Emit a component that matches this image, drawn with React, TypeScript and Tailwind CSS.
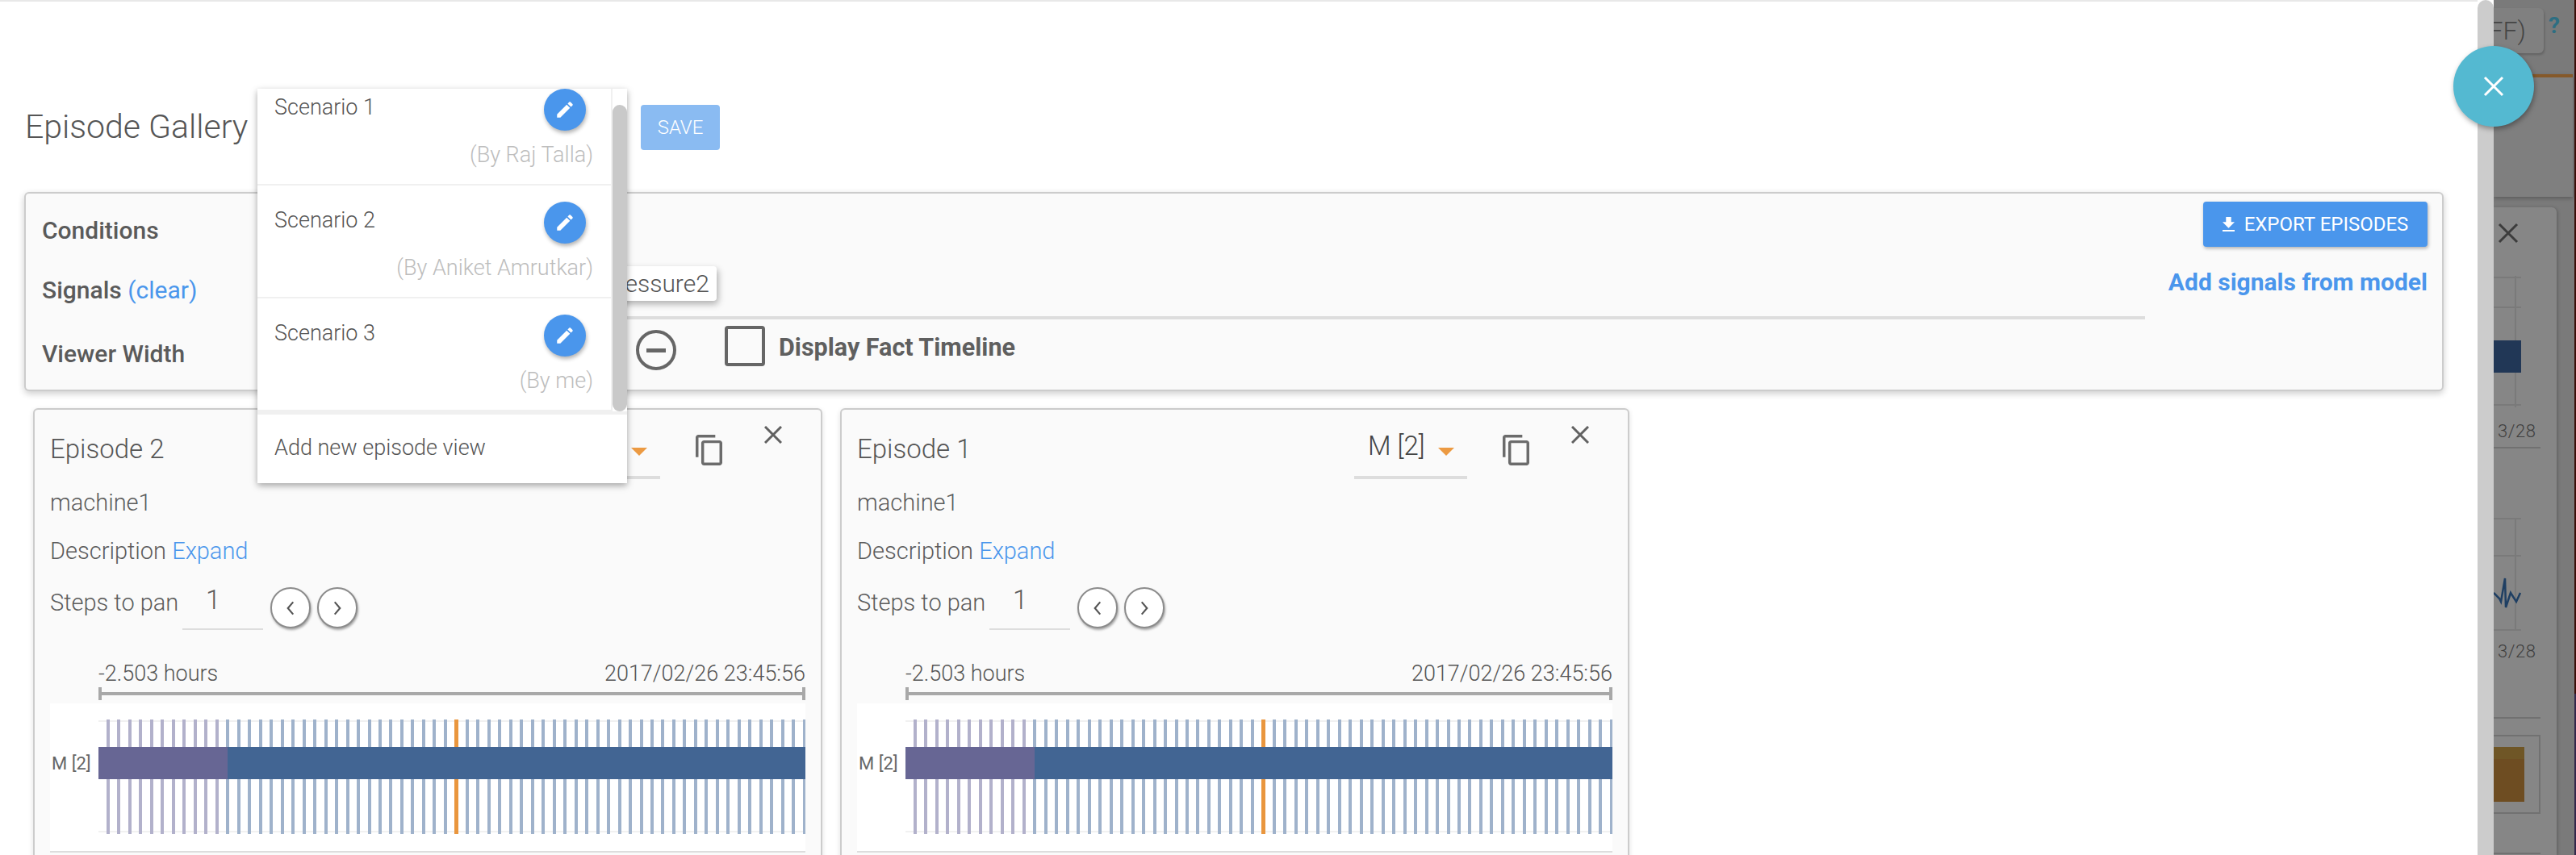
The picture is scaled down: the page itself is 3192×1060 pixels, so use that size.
import React from "react";

const TICK_COUNT = 65;
const ticks = Array.from({ length: TICK_COUNT }, (_, i) => Math.round(10 + i * 13.48));

function Timeline() {
  return (
    <svg width="876" height="183" viewBox="0 0 876 183" shapeRendering="crispEdges" className="block">
      <rect x="0" y="21" width="876" height="2" fill="#f1f1f1" />
      <rect x="0" y="158" width="876" height="2" fill="#f1f1f1" />
      {ticks.map((x, i) => (
        <rect key={i} x={x} y="20" width={i === 32 ? 5 : 4} height="142" fill={i === 32 ? "#e9963e" : i < 11 ? "#b2b1cb" : "#9fb2cb"} />
      ))}
      <rect x="0" y="54" width="160" height="40" fill="#676694" />
      <rect x="160" y="54" width="716" height="40" fill="#426593" />
    </svg>
  );
}

function EpisodeCard({ title }: { title: string }) {
  return (
    <div className="w-[978px] h-[600px] shrink-0 border-2 border-[#cccccc] rounded-[6px] bg-[#fafafa] shadow-[0_2px_6px_rgba(0,0,0,0.12)] px-[19px] flex flex-col text-[#5c5c5c]">
      <div className="h-[95px] flex items-start shrink-0">
        <div className="mt-[27px] text-[33px] leading-[44px] font-light text-[#555]">{title}</div>
        <div className="ml-auto mt-[20px] w-[140px] h-[66px] border-b-4 border-[#dddddd] flex items-start">
          <span className="ml-[17px] mt-[5px] text-[33px] leading-[40px] font-light text-[#444]">M [2]</span>
          <svg width="20" height="10" viewBox="0 0 20 10" className="ml-[16px] mt-[27px]">
            <path d="M0 0h20L10 10z" fill="#ec9a42" />
          </svg>
        </div>
        <svg width="33" height="38" viewBox="2 1 19 22" className="ml-[44px] mt-[31px]" preserveAspectRatio="none">
          <path
            d="M16 1H4c-1.1 0-2 .9-2 2v14h2V3h12V1zm3 4H8c-1.1 0-2 .9-2 2v14c0 1.1.9 2 2 2h11c1.1 0 2-.9 2-2V7c0-1.1-.9-2-2-2zm0 16H8V7h11v14z"
            fill="#6b6b6b"
          />
        </svg>
        <svg width="22" height="22" viewBox="0 0 22 22" className="ml-[52px] mt-[20px] mr-[29px]">
          <path d="M1 1L21 21M21 1L1 21" stroke="#616161" strokeWidth="3" />
        </svg>
      </div>
      <div className="h-[40px] text-[29px] leading-[40px] font-light shrink-0">machine1</div>
      <div className="mt-[20px] h-[40px] text-[29px] leading-[40px] font-light shrink-0">
        Description <span className="text-[#4a96ec]">Expand</span>
      </div>
      <div className="mt-[19px] h-[63px] flex items-start shrink-0">
        <span className="w-[157px] mt-[5px] text-[29px] leading-[40px] font-light whitespace-nowrap">Steps to pan</span>
        <div className="ml-[7px] w-[100px] h-[59px] border-b-2 border-[#dddddd] text-[33px] leading-[44px] font-light pl-[29px]">1</div>
        <div className="ml-[9px] mt-[6px] flex gap-[8px]">
          {["M15 5l-6 7 6 7", "M9 5l6 7-6 7"].map((d) => (
            <div key={d} className="w-[50px] h-[51px] rounded-full border-2 border-[#8c8c8c] bg-white shadow-[1px_2px_3px_rgba(0,0,0,0.35)] flex items-center justify-center">
              <svg width="26" height="26" viewBox="0 0 24 24">
                <path d={d} fill="none" stroke="#555" strokeWidth="2" />
              </svg>
            </div>
          ))}
        </div>
      </div>
      <div className="mt-[30px] ml-[60px] h-[40px] flex justify-between items-center text-[27px] font-light text-[#555] shrink-0">
        <span>-2.503 hours</span>
        <span>2017/02/26 23:45:56</span>
      </div>
      <svg width="876" height="16" viewBox="0 0 876 16" shapeRendering="crispEdges" className="block ml-[60px] mt-[-3px] shrink-0">
        <rect x="0" y="0" width="4" height="16" fill="#a8a8a8" />
        <rect x="872" y="0" width="4" height="16" fill="#a8a8a8" />
        <rect x="0" y="6" width="876" height="4" fill="#a8a8a8" />
      </svg>
      <div className="mt-[4px] h-[185px] shrink-0 bg-white border-b-2 border-[#dddddd] flex">
        <div className="w-[60px] h-[183px] flex items-center pl-[2px] pb-[35px] text-[22px] text-[#666] font-normal whitespace-nowrap">M [2]</div>
        <Timeline />
      </div>
    </div>
  );
}

function MenuRow({ name, by, first }: { name: string; by: string; first?: boolean }) {
  return (
    <div className={`${first ? "h-[120px]" : "h-[140px] pt-[20px]"} border-b-2 border-[#f0f0f0] flex flex-col pl-[21px] pr-[22px] shrink-0`}>
      <div className="flex justify-between items-start">
        <span className="text-[27px] leading-[44px] mt-[1px] font-light text-[#555]">{name}</span>
        <div className="w-[52px] h-[52px] mr-[9px] rounded-full bg-[#4a96ec] shadow-[1px_3px_5px_rgba(0,0,0,0.3)] flex items-center justify-center">
          <svg width="26" height="26" viewBox="0 0 24 24">
            <path
              d="M3 17.25V21h3.75L17.81 9.94l-3.75-3.75L3 17.25zM20.71 7.04c.39-.39.39-1.02 0-1.41l-2.34-2.34c-.39-.39-1.02-.39-1.41 0l-1.83 1.83 3.75 3.75 1.83-1.83z"
              fill="#fff"
            />
          </svg>
        </div>
      </div>
      <div className="mt-[8px] text-right text-[27px] leading-[44px] font-light text-[#bdbdbd]">{by}</div>
    </div>
  );
}

function Backdrop() {
  return (
    <div className="w-[102px] h-[1060px] shrink-0 flex bg-[#7a7a7a] overflow-hidden">
      <div className="w-[100px] shrink-0 flex flex-col">
        <div className="h-[92px] shrink-0 flex items-start">
          <div className="w-[62px] h-[56px] mt-[10px] bg-[#808080] rounded-br-[6px] rounded-tr-[6px] shadow-[1px_2px_3px_rgba(0,0,0,0.2)] overflow-hidden flex justify-end items-center pr-[22px] text-[32px] text-[#454545] font-light whitespace-nowrap">
            OFF)
          </div>
          <span className="ml-[6px] mt-[16px] text-[28px] leading-[32px] font-bold text-[#2d6e82]">?</span>
        </div>
        <div className="h-[152px] w-[98px] shrink-0 border-t-4 border-[#85592a] bg-[#7f7f7f] shadow-[0_2px_5px_rgba(0,0,0,0.25)]" />
        <div className="mt-[13px] w-[78px] h-[803px] shrink-0 bg-[#868686] rounded-tr-[6px] shadow-[1px_1px_4px_rgba(0,0,0,0.25)] flex flex-col">
          <svg width="78" height="257" viewBox="0 0 78 257" className="block shrink-0">
            <path d="M7 21L29 43M29 21L7 43" stroke="#3c3c3c" strokeWidth="3" fill="none" />
            <path d="M0 87H34M0 124H34M0 245H34M27 85V248" stroke="#7a7a7a" strokeWidth="2" fill="none" />
            <rect x="0" y="165" width="34" height="40" fill="#213756" />
          </svg>
          <div className="mt-[7px] h-[28px] shrink-0 text-[22px] leading-[28px] pl-[5px] text-[#3f3f3f] font-light tracking-[0.5px]">3/28</div>
          <div className="mt-[5px] w-[58px] h-[2px] bg-[#717171] shrink-0" />
          <svg width="78" height="238" viewBox="0 0 78 238" className="block shrink-0">
            <path d="M0 87H34M0 133H34M0 225H34M27 87V225" stroke="#7a7a7a" strokeWidth="2" fill="none" />
            <path d="M0 179L7 186L9 190L14 161L15 197L21 179L28 190L33 179" stroke="#1f3f63" strokeWidth="2.5" fill="none" />
          </svg>
          <div className="h-[28px] shrink-0 text-[22px] leading-[28px] pl-[5px] text-[#3f3f3f] font-light tracking-[0.5px]">3/28</div>
          <div className="mt-[67px] w-[58px] h-[2px] bg-[#717171] shrink-0" />
          <div className="mt-[20px] w-[58px] h-[98px] shrink-0 border-y-2 border-r-2 border-[#717171] flex items-center">
            <div className="w-[38px] h-[68px] flex flex-col">
              <div className="h-[15px] bg-[#6f5626]" />
              <div className="flex-1 bg-[#6e4d22]" />
            </div>
          </div>
          <div className="mt-[48px] w-[58px] h-[2px] bg-[#717171] shrink-0" />
        </div>
      </div>
      <div className="w-[2px] h-full flex flex-col">
        <div className="h-[860px] bg-[#3a0d08]" />
        <div className="flex-1 bg-[#33264a]" />
      </div>
    </div>
  );
}

export default function App() {
  return (
    <div className="relative w-[3192px] h-[1060px] overflow-hidden flex bg-white font-['Roboto',sans-serif]">
      {/* Modal */}
      <div className="w-[3070px] h-[1060px] shrink-0 border-t-2 border-[#e8e8e8] flex flex-col">
        <div className="mt-[128px] h-[56px] shrink-0 pl-[31px] flex items-center">
          <h1 className="w-[763px] text-[41px] font-light text-[#555]">Episode Gallery</h1>
          <div className="w-[98px] h-[56px] rounded-[4px] bg-[#8abbf2] text-white text-[24px] font-light flex items-center justify-center">SAVE</div>
        </div>
        <div className="mt-[52px] ml-[30px] w-[2998px] h-[247px] shrink-0 border-2 border-[#cccccc] rounded-[6px] bg-[#fafafa] shadow-[0_3px_8px_rgba(0,0,0,0.2)] flex flex-col pl-[20px] pr-[18px] text-[#5a5a5a]">
          <div className="h-[80px] flex items-start shrink-0">
            <div className="mt-[26px] text-[30px] leading-[40px] font-medium">Conditions</div>
            <div className="ml-auto mt-[10px] w-[278px] h-[56px] rounded-[4px] bg-[#4a96ec] shadow-[1px_2px_4px_rgba(0,0,0,0.3)] text-white text-[24px] font-normal flex items-center justify-center gap-[12px]">
              <svg width="15" height="18" viewBox="5 3 14 17" preserveAspectRatio="none">
                <path d="M19 9h-4V3H9v6H5l7 7 7-7zM5 18v2h14v-2H5z" fill="#fff" />
              </svg>
              EXPORT EPISODES
            </div>
          </div>
          <div className="h-[76px] flex items-start shrink-0">
            <div className="w-[300px] mt-[20px] text-[30px] leading-[40px] font-medium">
              Signals <span className="text-[#4a96ec] font-normal">(clear)</span>
            </div>
            <div className="w-[2306px] h-[76px] border-b-4 border-[#dddddd] flex items-start pl-[387px]">
              <div className="mt-[10px] h-[43px] px-[9px] rounded-[4px] bg-white shadow-[2px_4px_8px_rgba(0,0,0,0.3)] text-[30px] leading-[43px] font-light text-[#555]">pressure2</div>
            </div>
            <div className="ml-auto mt-[10px] text-[30px] leading-[40px] font-bold text-[#4a96ec]">Add signals from model</div>
          </div>
          <div className="flex-1 flex items-start">
            <div className="w-[736px] mt-[23px] text-[30px] leading-[40px] font-medium">Viewer Width</div>
            <svg width="50" height="50" viewBox="0 0 50 50" className="mt-[13px]">
              <circle cx="25" cy="25" r="23" fill="none" stroke="#666" strokeWidth="4" />
              <rect x="13" y="23" width="24" height="5" fill="#666" />
            </svg>
            <div className="ml-[60px] mt-[8px] w-[50px] h-[50px] border-[4px] border-[#666] rounded-[4px]" />
            <div className="ml-[17px] mt-[15px] text-[30.5px] leading-[40px] font-bold text-[#5f5f5f]">Display Fact Timeline</div>
          </div>
        </div>
        <div className="mt-[21px] ml-[41px] flex gap-[22px]">
          <EpisodeCard title="Episode 2" />
          <EpisodeCard title="Episode 1" />
        </div>
      </div>
      {/* Modal scrollbar */}
      <div className="w-[20px] h-[1060px] shrink-0 bg-[#cccccc] rounded-tl-[10px] rounded-tr-[10px]" />
      <Backdrop />

      {/* Dropdown menu over the page */}
      <div className="absolute left-[319px] top-[110px] w-[458px] h-[489px] bg-white shadow-[0_3px_8px_rgba(0,0,0,0.35)] flex flex-col">
        <div className="h-[400px] flex overflow-hidden shrink-0">
          <div className="w-[440px] border-r-2 border-[#f0f0f0]">
            <MenuRow first name="Scenario 1" by="(By Raj Talla)" />
            <MenuRow name="Scenario 2" by="(By Aniket Amrutkar)" />
            <MenuRow name="Scenario 3" by="(By me)" />
          </div>
          <div className="flex-1 pt-[20px]">
            <div className="h-[380px] w-full rounded-[10px] bg-[#c9c9c9]" />
          </div>
        </div>
        <div className="h-[89px] border-t-4 border-[#f0f0f0] flex items-center pl-[21px] pb-[3px] text-[27px] font-light text-[#555]">Add new episode view</div>
      </div>

      {/* Floating close button */}
      <div className="absolute left-[3040px] top-[57px] w-[100px] h-[100px] rounded-full bg-[#54b9d1] shadow-[1px_3px_6px_rgba(0,0,0,0.35)] flex items-center justify-center">
        <svg width="26" height="26" viewBox="0 0 26 26">
          <path d="M2 2L24 24M24 2L2 24" stroke="#fff" strokeWidth="3" />
        </svg>
      </div>
    </div>
  );
}
